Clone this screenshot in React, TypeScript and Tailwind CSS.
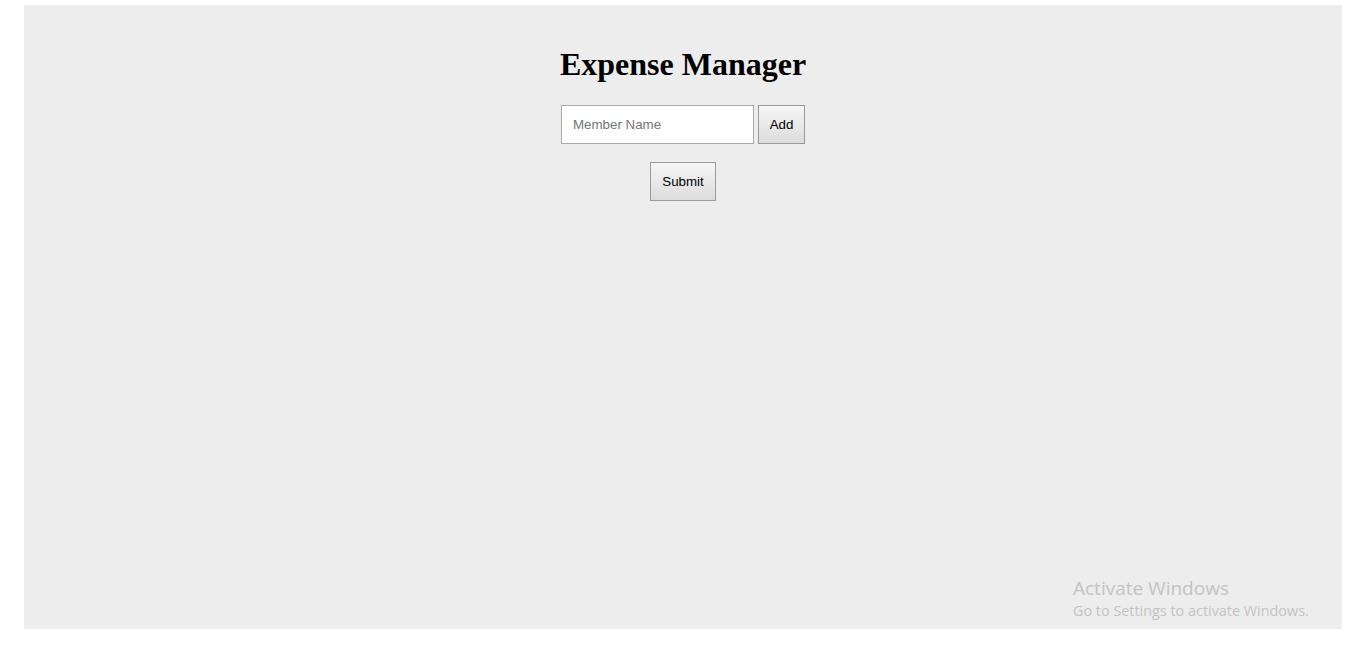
export default function App() {
  return (
    <div className="w-[1365px] h-[648px] bg-white relative overflow-hidden">
      <div className="ml-[24px] mt-[5px] w-[1318px] h-[624px] bg-[#ededed] flex flex-col items-center pt-[41px]">
        <h1 className="font-['Liberation_Serif',serif] font-bold text-[32px] leading-[37px] text-black">
          Expense Manager
        </h1>
        <div className="flex gap-[4px] mt-[22px]">
          <input
            placeholder="Member Name"
            className="w-[193px] h-[39px] bg-white border border-[#a9a9a9] px-[11px] font-['Liberation_Sans',sans-serif] text-[13.333px] text-black placeholder:text-[#757575] outline-none"
          />
          <button className="w-[47px] h-[39px] border border-[#9a9a9a] bg-gradient-to-b from-[#f6f6f6] to-[#dcdcdc] font-['Liberation_Sans',sans-serif] text-[13.333px] text-black">
            Add
          </button>
        </div>
        <button className="mt-[18px] w-[66px] h-[39px] border border-[#9a9a9a] bg-gradient-to-b from-[#f6f6f6] to-[#dcdcdc] font-['Liberation_Sans',sans-serif] text-[13.333px] text-black">
          Submit
        </button>
      </div>
      <div className="absolute left-[1073px] top-[576px] font-['Open_Sans',sans-serif] text-[#c3c3c3] leading-none">
        <div className="text-[19px] leading-[24px]">Activate Windows</div>
        <div className="text-[14.4px] leading-[21px]">Go to Settings to activate Windows.</div>
      </div>
    </div>
  );
}
